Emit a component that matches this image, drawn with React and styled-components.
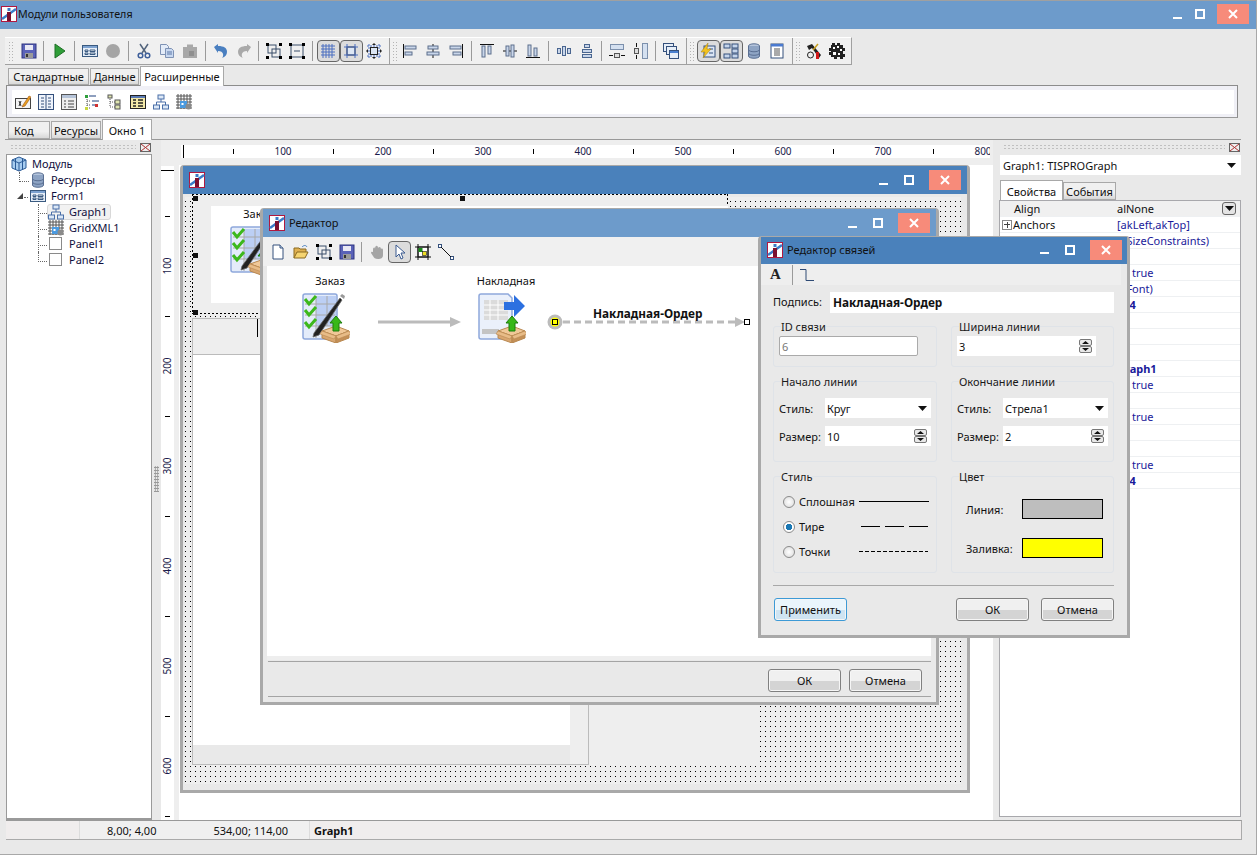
import React from 'react';
import styled, { createGlobalStyle } from 'styled-components';

const GlobalStyle = createGlobalStyle`
  html, body { margin: 0; padding: 0; background: #e9e9e9; }
  * { box-sizing: border-box; }
  body { font-family: "Noto Sans", "Liberation Sans", sans-serif; font-size: 11px; color: #111; }
`;

/* icons */
const Corners = ({ x1 = 1, y1 = 1, x2 = 15, y2 = 15 }) => (
  <g fill="#000">
    <rect x={x1 - 1} y={y1 - 1} width="3" height="3" />
    <rect x={x2 - 2} y={y1 - 1} width="3" height="3" />
    <rect x={x1 - 1} y={y2 - 2} width="3" height="3" />
    <rect x={x2 - 2} y={y2 - 2} width="3" height="3" />
  </g>
);

const ICONS = {
  save: <g><rect x="1" y="1" width="14" height="14" fill="#5a62b8" stroke="#2e3480" /><rect x="4" y="2" width="8" height="5" fill="#e8e8f4" /><rect x="4" y="10" width="8" height="5" fill="#9a9a9a" /><rect x="5" y="11" width="2" height="3" fill="#333" /></g>,
  play: <path d="M4 1 L14 8 L4 15 Z" fill="#2f9e38" stroke="#1f6f26" />,
  form: <g><rect x="0.5" y="2.5" width="15" height="11" fill="#e6eef8" stroke="#3a5a80" /><rect x="1" y="3" width="14" height="2" fill="#7da2d0" /><path d="M3 7h3v1.5H3zM3 10h3v1.5H3z" fill="none" stroke="#3a5a80" /><path d="M8 7h5v1.5H8zM8 10h5v1.5H8z" fill="#fff" stroke="#3a5a80" /></g>,
  stop: <circle cx="8" cy="8" r="7" fill="#a5a5a5" />,
  cut: <g fill="none" stroke="#52647c" strokeWidth="1.5"><path d="M4 1l6 9M12 1L6 10" /><circle cx="4.5" cy="12.5" r="2.3" stroke="#3e5f9a" /><circle cx="11.5" cy="12.5" r="2.3" stroke="#3e5f9a" /></g>,
  copy: <g stroke="#7e92b4"><path d="M1.5 1.5h6l2 2v8h-8z" fill="#e4ecf8" /><path d="M6.5 5.5h6l2 2v7h-8z" fill="#c8d8f0" /><path d="M8 9h5M8 11h5" stroke="#5a76a6" /></g>,
  paste: <g fill="#a8a8a8"><rect x="1" y="4" width="14" height="11" /><rect x="5" y="1.5" width="6" height="4" /><rect x="7" y="8" width="5" height="5" fill="#8f8f8f" /></g>,
  undo: <path d="M1 4l4-3v2c6 0 9 2 9 6 0 3-2 5-5 6 2-2 2-7-4-7v2z" fill="#4a7fc0" />,
  redo: <path d="M15 4l-4-3v2C5 3 2 5 2 9c0 3 2 5 5 6-2-2-2-7 4-7v2z" fill="#a9a9a9" />,
  group: <g><g fill="none" stroke="#3a4f6a"><rect x="2" y="2" width="8" height="8" /><rect x="6" y="6" width="8" height="8" /></g><Corners /></g>,
  ungroup: <g><g fill="none" stroke="#3a4f6a"><rect x="2" y="2" width="12" height="12" /><path d="M5 8h6" /></g><Corners /></g>,
  grid: <path d="M3 1v14M6 1v14M9 1v14M12 1v14M1 3h14M1 6h14M1 9h14M1 12h14" stroke="#4a6fc0" fill="none" />,
  snap: <g><rect x="4" y="4" width="8" height="8" fill="#dce6f4" stroke="#222" /><path d="M1 4h14M1 12h14M4 1v14M12 1v14" stroke="#4a6fc0" /></g>,
  snap2: <g><rect x="4.5" y="4.5" width="7" height="7" fill="#dce6f4" stroke="#222" /><path d="M1 3h14M1 13h14M3 1v14M13 1v14" stroke="#4a6fc0" strokeDasharray="2 1" /><path d="M8 0l-2 2h4zM8 16l-2-2h4zM0 8l2-2v4zM16 8l-2-2v4z" fill="#222" /></g>,
  alignL: <g><path d="M1.5 1v14" stroke="#111" /><rect x="3" y="3" width="11" height="3" fill="#c9d6ea" stroke="#5c6f8c" /><rect x="3" y="9" width="7" height="3" fill="#c9d6ea" stroke="#5c6f8c" /></g>,
  alignC: <g><path d="M8 1v14" stroke="#111" /><rect x="3" y="3" width="10" height="3" fill="#c9d6ea" stroke="#5c6f8c" /><rect x="2" y="9" width="12" height="3" fill="#c9d6ea" stroke="#5c6f8c" /></g>,
  alignR: <g><path d="M14.5 1v14" stroke="#111" /><rect x="2" y="3" width="11" height="3" fill="#c9d6ea" stroke="#5c6f8c" /><rect x="5" y="9" width="8" height="3" fill="#c9d6ea" stroke="#5c6f8c" /></g>,
  alignT: <g><path d="M1 1.5h14" stroke="#111" /><rect x="3" y="3" width="3" height="11" fill="#c9d6ea" stroke="#5c6f8c" /><rect x="9" y="3" width="3" height="8" fill="#c9d6ea" stroke="#5c6f8c" /></g>,
  alignM: <g><path d="M1 8h14" stroke="#111" /><rect x="4" y="3" width="3" height="10" fill="#c9d6ea" stroke="#5c6f8c" /><rect x="9" y="2" width="3" height="12" fill="#c9d6ea" stroke="#5c6f8c" /></g>,
  alignB: <g><path d="M1 14.5h14" stroke="#111" /><rect x="3" y="2" width="3" height="11" fill="#c9d6ea" stroke="#5c6f8c" /><rect x="9" y="5" width="3" height="8" fill="#c9d6ea" stroke="#5c6f8c" /></g>,
  spaceH: <g fill="#c9d6ea" stroke="#4a6690"><rect x="1.5" y="5.5" width="3" height="5" /><rect x="6.5" y="3.5" width="3" height="9" /><rect x="11.5" y="5.5" width="3" height="5" /></g>,
  spaceV: <g fill="#c9d6ea" stroke="#4a6690"><rect x="5.5" y="1.5" width="5" height="3" /><rect x="3.5" y="6.5" width="9" height="3" /><rect x="3.5" y="11.5" width="9" height="3" /></g>,
  sizeW: <g><rect x="1.5" y="1.5" width="13" height="5" fill="#d4e0f0" stroke="#7c90ac" /><rect x="5.5" y="10.5" width="5" height="4" fill="#ddd" stroke="#555" /><path d="M0 12.5h4M12 12.5h4" stroke="#111" /></g>,
  sizeH: <g><rect x="10.5" y="0.5" width="5" height="15" fill="#d4e0f0" stroke="#7c90ac" /><rect x="2.5" y="5.5" width="4" height="5" fill="#ddd" stroke="#555" /><path d="M4.5 0v4M4.5 12v4" stroke="#111" /></g>,
  windows: <g fill="#e6eef8" stroke="#34507c"><rect x="0.5" y="0.5" width="10" height="8" /><rect x="3.5" y="3.5" width="10" height="8" /><rect x="6.5" y="7.5" width="9" height="8" /><path d="M7 9h8" stroke="#4a80d0" strokeWidth="2" /></g>,
  events: <g><rect x="4" y="3" width="11" height="11" fill="#dce6f4" stroke="#34507c" /><path d="M9 6h4M9 10h4" stroke="#34507c" /><path d="M8 0L1 9h4l-2 6 8-9H7z" fill="#f2c21e" stroke="#a07c10" strokeWidth="0.5" /></g>,
  struct: <g fill="#c4d4ea" stroke="#34507c"><rect x="1" y="1" width="6" height="4" /><rect x="1" y="11" width="6" height="4" /><rect x="9" y="1" width="6" height="4" /><rect x="9" y="6" width="6" height="4" /><rect x="9" y="11" width="6" height="4" /></g>,
  db: <g stroke="#5a6f92"><ellipse cx="8" cy="3" rx="5.5" ry="2.2" fill="#b4c4dc" /><path d="M2.5 3v10c0 3 11 3 11 0V3" fill="#8ea4c4" /><path d="M2.5 6.5c0 3 11 3 11 0M2.5 10c0 3 11 3 11 0" fill="none" /></g>,
  page: <g><rect x="2" y="1" width="12" height="14" fill="#fff" stroke="#34507c" /><rect x="2" y="1" width="12" height="2.5" fill="#4a7ad0" /><path d="M5 6h6M5 8h6M5 10h6M5 12h6" stroke="#555" /></g>,
  tools: <g><path d="M1 3l5-2 9 11-2 3L6 5 3 7z" fill="#222" /><path d="M10 9h3v7h-3z" fill="#d01818" /><circle cx="4.5" cy="12" r="3" fill="none" stroke="#222" /><path d="M12 1L7 7" stroke="#c8a020" strokeWidth="1.5" /></g>,
  chip: <g fill="#222"><path d="M3 0h3v2h2V0h3v2h3v3h2v3h-2v3h2v3h-2v2h-3v-2H8v2H5v-2H2v-2H0v-3h2V8H0V5h2V2h1z" /><path d="M4 4h2v2H4zM8 3h2v2H8zM11 6h2v2h-2zM4 9h3v3H4zM9 10h2v2H9z" fill="#fff" /></g>,
  edit: <g><rect x="0.5" y="4.5" width="15" height="10" fill="#f4f4f4" stroke="#444" /><path d="M4 7l2 5M6 7l-2 5" stroke="#333" /><path d="M8 11l6-9 2 1-6 9-3 1z" fill="#e8a020" stroke="#a05010" strokeWidth="0.6" /></g>,
  cols: <g><rect x="0.5" y="0.5" width="15" height="15" fill="#eef3fb" stroke="#34507c" /><path d="M8 1v14" stroke="#34507c" /><path d="M3 4h3M3 7h3M3 10h3M3 13h3M10 4h3M10 7h3M10 10h3M10 13h3" stroke="#34507c" /></g>,
  listbox: <g><rect x="0.5" y="0.5" width="15" height="15" fill="#eee" stroke="#555" /><rect x="1" y="1" width="14" height="3" fill="#b6c4d8" /><path d="M3 7h2M7 7h6M3 10h2M7 10h6M3 13h2M7 13h6" stroke="#444" /></g>,
  treeA: <g><path d="M3 3v11M3 7h4M3 11h4M3 14h4" stroke="#555" strokeDasharray="1 1" fill="none" /><path d="M5 2h7M8 7h7M8 11h3" stroke="#1c3e7c" /><rect x="1" y="1" width="3" height="3" fill="#2e9e3a" /><rect x="11" y="10" width="3" height="3" fill="#d03030" /><rect x="1" y="13" width="3" height="3" fill="#c8d840" /></g>,
  treeB: <g><path d="M3 3v10M3 8h5M3 13h5" stroke="#555" strokeDasharray="1 1" fill="none" /><rect x="1" y="1" width="4" height="3" fill="#e0e6b0" stroke="#555" /><rect x="8" y="6" width="5" height="4" fill="#e0e6b0" stroke="#555" /><rect x="8" y="11" width="5" height="4" fill="#e0e6b0" stroke="#555" /></g>,
  table: <g><rect x="0.5" y="1.5" width="15" height="13" fill="#f2e8a8" stroke="#222" /><rect x="1" y="2" width="14" height="2" fill="#5a7ab4" /><path d="M3 6h3M3 9h3M3 12h3M8 6h5M8 9h5M8 12h5" stroke="#222" strokeWidth="1.4" /></g>,
  org: <g fill="#dce8f6" stroke="#4a6fa8"><rect x="5" y="1" width="6" height="4" /><rect x="0.5" y="11" width="6" height="4" /><rect x="9.5" y="11" width="6" height="4" /><path d="M8 5v3M3.5 11V8h9v3" fill="none" /></g>,
  gridxml: <g><path d="M2 0v15M5 0v15M8 0v15M11 0v15M14 0v15M0 2h16M0 5h16M0 8h16M0 11h16M0 14h16" stroke="#555" /><rect x="4" y="7" width="7" height="7" fill="#4a9ae0" /><rect x="5.5" y="9" width="2" height="2" fill="#fff" /><circle cx="12.5" cy="12.5" r="3" fill="#8a8a8a" /></g>,
  module: <g stroke="#2a5a96" fill="#a8cdf0"><path d="M8 1l7 3v8l-7 3-7-3V4z" /><path d="M1 4l7 3 7-3M8 7v8M4.5 2.5v11M11.5 2.5v11" fill="none" /></g>,
  checkbox: <rect x="1.5" y="1.5" width="12" height="12" fill="#fff" stroke="#8a8a8a" />,
  newDoc: <g><path d="M3 1h7l3 3v11H3z" fill="#fff" stroke="#34507c" /><path d="M10 1v3h3" fill="#c8d8ec" stroke="#34507c" /></g>,
  open: <g><path d="M1 14V4h5l1 1h6v3" fill="#e0b050" stroke="#8a6a20" /><path d="M1 14l3-6h11l-3 6z" fill="#f6d470" stroke="#8a6a20" /><path d="M9 3c2-2 4-2 5 0" fill="none" stroke="#4a80c0" /></g>,
  hand: <path d="M4 6c0-3 2-3 2-1 0-4 3-4 3-1 1-2 3-1 3 1 1-1 2 0 2 1v5c0 3-2 4-5 4s-4-1-5-3L2 9c0-2 2-1 2-1z" fill="#a5a5a5" />,
  pointer: <path d="M4 1v12l3-3 2 5 2-1-2-5h4z" fill="#fff" stroke="#3a5a90" />,
  nodeTool: <g><rect x="3" y="3" width="10" height="10" fill="#fff" stroke="#111" /><path d="M0 3h16M0 13h16M3 0v16M13 0v16" stroke="#111" /><rect x="3.5" y="4" width="4" height="4" fill="#1a8a1a" /><rect x="7.5" y="7.5" width="4" height="4" fill="#f0e020" stroke="#111" strokeWidth="0.6" /></g>,
  linkTool: <g><rect x="0.5" y="0.5" width="3" height="3" fill="#fff" stroke="#34507c" /><rect x="12.5" y="12.5" width="3" height="3" fill="#fff" stroke="#34507c" /><path d="M3 3l10 10" stroke="#111" /></g>,
  elbow: <path d="M2 2.5h6v11h8" fill="none" stroke="#2e4a74" />,
};

const Glyph = styled.svg`
  display: block;
  flex: none;
`;

const Ico = ({ name, size = 16 }) => (
  <Glyph width={size} height={size} viewBox="0 0 16 16">{ICONS[name]}</Glyph>
);

const AppLogo = () => (
  <Glyph width="16" height="16" viewBox="0 0 16 16">
    <rect x="0.5" y="0.5" width="15" height="15" fill="#fff" stroke="#b01840" />
    <path d="M1 13L15 3" stroke="#3a7cc8" strokeWidth="2.5" />
    <rect x="6" y="6" width="4" height="9" fill="#7a1030" />
    <rect x="6.5" y="2" width="3" height="3" fill="#3a7cc8" />
  </Glyph>
);

const Carton = () => (
  <g>
    <path d="M20 38l14-5 13 5-13 5z" fill="#f0c898" stroke="#b88850" />
    <path d="M20 38v7l14 5V43z" fill="#d8a670" stroke="#b88850" />
    <path d="M47 38v7l-13 5V43z" fill="#c49058" stroke="#b88850" />
    <path d="M20 38l-2 3 14 5 2-3zM47 38l2 3-13 5-2-3z" fill="#e8bc88" stroke="#b88850" strokeWidth="0.6" />
    <path d="M34 23l6 7h-3v8h-6v-8h-3z" fill="#38b818" stroke="#1c7c0c" />
  </g>
);

const OrderIcon = () => (
  <Glyph width="48" height="50" viewBox="0 0 48 50">
    <rect x="1" y="1" width="34" height="45" rx="2" fill="#e4ecfa" stroke="#8ea8dc" strokeWidth="1.5" />
    <rect x="14" y="3" width="20" height="30" fill="#bccff4" />
    <path d="M3 11h30M3 22h30M3 33h30M14 3v42M25 3v30" stroke="#a8a8a8" fill="none" />
    <path d="M3 6l4 5 7-8M3 17l4 5 7-8M3 29l4 5 7-8" fill="none" stroke="#3cb81c" strokeWidth="3" />
    <path d="M12 40L38 5l2 2-23 35-6 2z" fill="#222" stroke="#666" strokeWidth="0.8" />
    <path d="M38 3l2-2 3 2-1 3z" fill="#999" />
    <Carton />
  </Glyph>
);

const InvoiceIcon = () => (
  <Glyph width="48" height="50" viewBox="0 0 48 50">
    <path d="M1 3a2 2 0 0 1 2-2h27l4 4v41H3a2 2 0 0 1-2-2z" fill="#eaf0fb" stroke="#8ea8dc" strokeWidth="1.5" />
    <path d="M6 7h24v20H6z" fill="#dbdbdb" />
    <path d="M6 12h24M6 17h24M6 22h24M12 7v20M20 7v20" stroke="#fff" />
    <rect x="4" y="36" width="17" height="5" fill="#c4c4c4" />
    <path d="M26 9h10V2l11 11-11 11v-7H26z" fill="#2c70e0" />
    <Carton />
  </Glyph>
);

const SpinGlyph = () => (
  <Glyph width="13" height="14" viewBox="0 0 13 14">
    <rect x="0.5" y="0.5" width="12" height="6" rx="1.5" fill="#e8e8e8" stroke="#777" />
    <rect x="0.5" y="7.5" width="12" height="6" rx="1.5" fill="#e8e8e8" stroke="#777" />
    <path d="M3 5l3.5-3L10 5zM3 9l3.5 3L10 9z" fill="#111" />
  </Glyph>
);

const ArrowGlyph = () => (
  <Glyph width="9" height="5" viewBox="0 0 9 5"><path d="M0 0h9L4.5 5z" fill="#111" /></Glyph>
);

const PanelClose = () => (
  <Glyph width="11" height="9" viewBox="0 0 11 9">
    <rect x="0.5" y="0.5" width="10" height="8" fill="#eee" stroke="#666" />
    <path d="M1 1l9 7M10 1L1 8" stroke="#b03030" />
  </Glyph>
);

/* page frame */
const Page = styled.div`
  position: relative;
  width: 1257px;
  height: 855px;
  background: #e9e9e9;
  border-top: 1px solid #a0a0a0;
  border-right: 1px solid #a8a8a8;
  border-bottom: 1px solid #a8a8a8;
  overflow: hidden;
  display: flex;
  flex-direction: column;
`;

const TitleBar = styled.div`
  display: flex;
  align-items: center;
  gap: ${(p) => p.$gap || 1}px;
  height: ${(p) => p.$height || 28}px;
  flex: none;
  padding: 0 ${(p) => p.$right || 7}px ${(p) => p.$under ?? 2}px ${(p) => p.$pad || 1}px;
  background: ${(p) => (p.$strong ? '#4a81bb' : '#6d9bcb')};
  color: #111;
  font-size: ${(p) => p.$size || 11}px;
`;

const TitleText = styled.span`
  flex: 1;
  margin-top: -1px;
`;

const WinMin = styled.span`
  width: 9px;
  height: 2px;
  margin-top: 7px;
  background: #fff;
`;

const WinMax = styled.span`
  width: 10px;
  height: 10px;
  margin-left: 12px;
  border: 2px solid #fff;
`;

const WinClose = styled.span`
  width: 32px;
  height: 20px;
  margin-left: 11px;
  background: #f78b7a;
  display: flex;
  align-items: center;
  justify-content: center;
`;

const Controls = () => (
  <>
    <WinMin />
    <WinMax />
    <WinClose>
      <Glyph width="10" height="10" viewBox="0 0 10 10"><path d="M1 1l8 8M9 1l-8 8" stroke="#fff" strokeWidth="2" /></Glyph>
    </WinClose>
  </>
);

const Body = styled.div`
  flex: 1;
  display: flex;
  flex-direction: column;
  padding: 8px 15px 0 5px;
`;

/* main toolbar */
const Toolbar = styled.div`
  display: flex;
  align-items: center;
  width: 847px;
  height: 28px;
  flex: none;
  padding-left: 3px;
  background: #f0f0f0;
  border-top: 1px solid #fff;
  border-bottom: 1px solid #a0a0a0;
  border-right: 1px solid #a0a0a0;
`;

const Grip = styled.span`
  width: 6px;
  height: 20px;
  margin-right: ${(p) => p.$after ?? 3}px;
  flex: none;
  background-image: radial-gradient(#b4b4b4 1px, transparent 1px);
  background-size: 3px 3px;
`;

const ToolBtn = styled.span`
  width: ${(p) => p.$w || 23}px;
  height: 22px;
  flex: none;
  display: flex;
  align-items: center;
  justify-content: center;
  border-radius: 4px;
  border: ${(p) => (p.$pressed ? '1px solid #666' : '1px solid transparent')};
  background: ${(p) => (p.$pressed ? '#dcdcdc' : 'transparent')};
`;

const Sep = styled.span`
  width: ${(p) => p.$w || 7.75}px;
  height: 20px;
  flex: none;
  display: flex;
  justify-content: center;
  &::before {
    content: '';
    width: 1px;
    background: #9a9a9a;
  }
`;

const BandBreak = styled.span`
  width: 3px;
  height: 27px;
  margin: 0 2px 0 1px;
  flex: none;
  border-right: 1px solid #a0a0a0;
`;

const TOOLBAR = [
  ['save'], ['play'], ['form', 'stop'], ['cut', 'copy', 'paste'], ['undo', 'redo'], ['group', 'ungroup'],
  ['*grid', '*snap', 'snap2'],
];
const TOOLBAR2 = [['alignL', 'alignC', 'alignR'], ['alignT', 'alignM', 'alignB'], ['spaceH', 'spaceV'], ['sizeW', 'sizeH'], ['windows']];

const ToolGroups = ({ groups }) =>
  groups.map((group, i) => (
    <React.Fragment key={i}>
      {i > 0 && <Sep />}
      {group.map((n) => (
        <ToolBtn key={n} $pressed={n[0] === '*'}>
          <Ico name={n.replace('*', '')} />
        </ToolBtn>
      ))}
    </React.Fragment>
  ));

/* tabs */
const TabRow = styled.div`
  display: flex;
  align-items: flex-end;
  height: ${(p) => p.$height}px;
  flex: none;
  padding-left: 3px;
  gap: 1px;
  border-bottom: ${(p) => (p.$line ? '1px solid #999' : 'none')};
`;

const Tab = styled.span`
  width: ${(p) => p.$w}px;
  height: ${(p) => (p.$active ? p.$h + 3 : p.$h)}px;
  flex: none;
  display: flex;
  align-items: center;
  justify-content: ${(p) => (p.$left ? 'flex-start' : 'center')};
  padding-left: ${(p) => (p.$left ? 5 : 0)}px;
  margin-bottom: ${(p) => (p.$active ? -1 : 0)}px;
  position: relative;
  background: ${(p) => (p.$active ? '#fff' : 'linear-gradient(#f0f0f0 60%, #d8d8d8)')};
  border: 1px solid #a8a8a8;
  border-bottom: ${(p) => (p.$active ? 'none' : '1px solid #a8a8a8')};
  font-size: 11px;
`;

const PaletteBox = styled.div`
  width: 1232px;
  height: 33px;
  flex: none;
  margin-left: 1px;
  padding: 4px 3px 3px 5px;
  border: 1px solid #8c8c8c;
  border-bottom-color: #999;
  background: #f0f0f6;
`;

const PaletteInner = styled.div`
  display: flex;
  align-items: center;
  height: 100%;
  gap: 7px;
  padding-left: 3px;
  background: #fff;
`;

/* work area */
const Work = styled.div`
  display: flex;
  height: 680px;
  flex: none;
  margin-left: 1px;
`;

const SidePanel = styled.div`
  width: ${(p) => p.$w}px;
  flex: none;
  display: flex;
  flex-direction: column;
`;

const PanelHead = styled.div`
  display: flex;
  align-items: center;
  justify-content: space-between;
  height: 14px;
  flex: none;
  padding: 0 1px 0 4px;
`;

const HeadGrip = styled.span`
  flex: 1;
  height: 7px;
  margin-right: 4px;
  background-image: radial-gradient(#c0c0c0 1px, transparent 1px);
  background-size: 4px 3px;
`;

const TreeBox = styled.div`
  flex: 1;
  background: #fff;
  border: 1px solid #9a9a9a;
  border-bottom-width: 2px;
  padding-top: 1px;
`;

const TreeRow = styled.div`
  display: flex;
  align-items: center;
  height: 16px;
  padding-left: ${(p) => p.$indent}px;
`;

const Branch = styled.span`
  width: ${(p) => p.$w}px;
  height: 16px;
  flex: none;
  margin-right: 1px;
  position: relative;
  &::before {
    content: '';
    position: absolute;
    left: 0;
    top: 0;
    width: 100%;
    height: 9px;
    border-left: ${(p) => (p.$flat ? 'none' : '1px dotted #666')};
    border-bottom: 1px dotted #666;
  }
  &::after {
    content: '';
    display: ${(p) => (p.$through ? 'block' : 'none')};
    position: absolute;
    left: 0;
    top: 9px;
    height: 7px;
    border-left: 1px dotted #666;
  }
`;

const Expander = styled.span`
  width: 0;
  height: 0;
  flex: none;
  margin-right: 1px;
  border-left: 6px solid transparent;
  border-bottom: 6px solid #444;
`;

const TreeItem = styled.span`
  display: flex;
  align-items: center;
  gap: 5px;
  height: 16px;
  padding-right: 3px;
  flex: none;
  border-radius: 3px;
  border: ${(p) => (p.$selected ? '1px solid #d8d8d8' : '1px solid transparent')};
  background: ${(p) => (p.$selected ? '#f2f2f2' : 'transparent')};
  font-size: 11px;
  color: #101040;
`;

const TreeLabel = styled.span`
  margin-top: -2px;
`;

const Splitter = styled.div`
  width: ${(p) => p.$w}px;
  flex: none;
  display: flex;
  align-items: center;
  justify-content: center;
`;

const SplitterGrip = styled.span`
  width: 5px;
  height: 26px;
  margin-bottom: 2px;
  background-image: radial-gradient(#999 1px, transparent 1px);
  background-size: 2.5px 3px;
`;

const Center = styled.div`
  flex: 1;
  display: flex;
  flex-direction: column;
  background: #eeeeee;
`;

const HRuler = styled.div`
  display: flex;
  width: 809px;
  height: 13px;
  margin: 5px 0 7px 20px;
  padding-left: 2px;
  flex: none;
  background: #fff;
  overflow: hidden;
`;

const HMark = styled.span`
  width: 50px;
  flex: none;
  position: relative;
  &::before {
    content: '${(p) => p.$label || ''}';
    position: absolute;
    left: 0;
    top: ${(p) => (p.$label ? -1 : 4)}px;
    width: ${(p) => (p.$label ? 'auto' : '1px')};
    height: ${(p) => (p.$label ? 'auto' : '5px')};
    transform: ${(p) => (p.$label ? 'translateX(-50%)' : 'none')};
    background: ${(p) => (p.$label ? 'transparent' : '#000')};
    font-size: 10px;
    color: #1a1a4a;
  }
`;

const HZero = styled(HMark)`
  &::before {
    top: 0;
    height: 13px;
  }
`;

const StageRow = styled.div`
  flex: 1;
  display: flex;
  min-height: 0;
`;

const VRuler = styled.div`
  width: 13px;
  flex: none;
  margin-top: 1px;
  background: #fff;
  display: flex;
  flex-direction: column;
  padding-top: 4px;
  overflow: hidden;
`;

const VMark = styled.span`
  height: 50px;
  flex: none;
  position: relative;
  &::before {
    content: '${(p) => p.$label || ''}';
    position: absolute;
    top: 0;
    left: ${(p) => (p.$label ? '0' : '4px')};
    width: ${(p) => (p.$label ? 'auto' : '5px')};
    height: ${(p) => (p.$label ? 'auto' : '1px')};
    background: ${(p) => (p.$label ? 'transparent' : '#000')};
    writing-mode: vertical-rl;
    transform: ${(p) => (p.$label ? 'translateY(-50%) rotate(180deg)' : 'none')};
    font-size: 10px;
    line-height: 13px;
    color: #1a1a4a;
  }
`;

const VZero = styled(VMark)`
  height: 46px;
  &::before {
    left: 0;
    width: 13px;
  }
`;

const Desktop = styled.div`
  flex: 1;
  margin-left: 5px;
  background: #fff;
`;

/* right panel */
const ComboBar = styled.div`
  display: flex;
  align-items: center;
  justify-content: space-between;
  height: 20px;
  margin: 1px 0 3px 1px;
  padding: 0 5px 0 3px;
  flex: none;
  background: #fff;
  font-size: 11px;
`;

const PropTabs = styled.div`
  display: flex;
  align-items: flex-end;
  height: 22px;
  flex: none;
  padding-left: 1px;
`;

const PropBox = styled.div`
  flex: 1;
  margin-bottom: 3px;
  background: #fff;
  border: 1px solid #a8a8ac;
  position: relative;
`;

const PropRow = styled.div`
  display: grid;
  grid-template-columns: 117px 1fr;
  height: 16px;
  align-items: center;
  border-bottom: 1px solid #eef0f2;
  background: ${(p) => (p.$current ? '#f0f0f0' : 'transparent')};
  font-size: 11px;
`;

const PropName = styled.span`
  display: flex;
  align-items: center;
  gap: 1px;
  padding-left: ${(p) => (p.$plus ? 2 : 14)}px;
`;

const PlusBox = styled.span`
  width: 10px;
  height: 10px;
  flex: none;
  border: 1px solid #888;
  background: linear-gradient(#444, #444) center / 6px 1px no-repeat, linear-gradient(#444, #444) center / 1px 6px no-repeat;
`;

const PropValue = styled.span`
  display: flex;
  align-items: center;
  justify-content: space-between;
  padding-left: ${(p) => p.$indent || 0}px;
  padding-right: 4px;
  color: ${(p) => (p.$plain ? '#111' : '#1a1a9a')};
  font-weight: ${(p) => (p.$bold ? 700 : 400)};
  white-space: nowrap;
`;

const DropBtn = styled.span`
  width: 14px;
  height: 13px;
  flex: none;
  display: flex;
  align-items: center;
  justify-content: center;
  border: 1px solid #666;
  border-radius: 3px;
  background: #e4e4e4;
`;

/* status bar */
const Status = styled.div`
  display: flex;
  align-items: center;
  width: 1236px;
  height: 20px;
  flex: none;
  margin-left: 1px;
  background: #f0eded;
  border-top: 1px solid #999;
  border-bottom: 1px solid #aaa;
  border-right: 1px solid #aaa;
  font-size: 11px;
`;

const StatusCell = styled.span`
  width: ${(p) => p.$w}px;
  height: 100%;
  flex: none;
  display: flex;
  align-items: center;
  padding-left: ${(p) => p.$pad}px;
  border-right: ${(p) => (p.$line ? '1px solid #dcdcdc' : 'none')};
  background: ${(p) => p.$bg || 'transparent'};
  font-weight: ${(p) => (p.$bold ? 700 : 400)};
`;

const StatusSize = styled.span`
  margin-left: 57px;
`;

/* floating windows */
const Win = styled.div`
  position: absolute;
  left: ${(p) => p.$x}px;
  top: ${(p) => p.$y}px;
  width: ${(p) => p.$w}px;
  height: ${(p) => p.$h}px;
  display: flex;
  flex-direction: column;
  background: #e9e9e9;
  border: 3px solid #a9a9a9;
  border-top-width: 1px;
  border-radius: 4px 4px 0 0;
`;

const Client = styled.div`
  flex: 1;
  padding: 3px 6px 6px 2px;
  display: flex;
`;

const Dots = styled.div`
  position: relative;
  flex: 1;
  background-color: #eee;
  background-image: linear-gradient(#eeeeee 4px, transparent 4px), linear-gradient(90deg, #000 1px, #eeeeee 1px);
  background-size: 5px 5px, 5px 5px;
`;

const Selection = styled.div`
  position: absolute;
  left: 7px;
  top: -3px;
  width: 536px;
  height: 120px;
  padding: 12px 0 11px 19px;
  display: flex;
  background:
    linear-gradient(90deg, #000 2px, transparent 2px) top left / 4px 1px repeat-x,
    linear-gradient(90deg, #000 2px, transparent 2px) bottom left / 4px 1px repeat-x,
    linear-gradient(#000 2px, transparent 2px) top left / 1px 4px repeat-y,
    linear-gradient(#000 2px, transparent 2px) top right / 1px 4px repeat-y,
    #eee;
`;

const Handle = styled.span`
  position: absolute;
  left: ${(p) => p.$x}px;
  top: ${(p) => p.$y}px;
  width: 5px;
  height: 5px;
  background: #111;
`;

const GraphCanvas = styled.div`
  flex: 1;
  background: #fff;
  display: flex;
  flex-direction: column;
  align-items: flex-start;
  padding: 0 0 0 19px;
`;

const NodeCaption = styled.div`
  width: 56px;
  text-align: center;
  white-space: nowrap;
  display: flex;
  justify-content: center;
  align-self: flex-start;
  font-size: 11px;
  color: #111;
  line-height: 12px;
  margin-bottom: ${(p) => p.$gap || 5}px;
  margin-top: ${(p) => p.$top || 0}px;
`;

const GridPanel = styled.div`
  position: absolute;
  left: 7px;
  top: 121px;
  width: 397px;
  height: 447px;
  display: flex;
  flex-direction: column;
  border: 1px solid #bbb;
  background: #eee;
`;

const GridHead = styled.div`
  height: 36px;
  flex: none;
  border-bottom: 1px solid #bbb;
  padding-left: 64px;
`;

const HeadTick = styled.span`
  display: block;
  width: 1px;
  height: 18px;
  background: #000;
`;

const GridWhite = styled.div`
  flex: 1;
  background: #fff;
  margin-right: 18px;
`;

const GridFoot = styled.div`
  height: 19px;
  flex: none;
  margin-right: 18px;
  background: #e9e9e9;
`;

const SidePane = styled.div`
  position: absolute;
  left: 405px;
  top: 121px;
  width: 168px;
  height: 447px;
  background: #eee;
`;

/* editor */
const EditorTools = styled.div`
  display: flex;
  align-items: center;
  height: 29px;
  flex: none;
  padding-left: 3px;
  background: #f0f0f0;
`;

const EditorBody = styled.div`
  flex: 1;
  margin: 0 5px 0 4px;
  background: #fff;
  position: relative;
`;

const Node = styled.div`
  position: absolute;
  left: ${(p) => p.$x}px;
  top: ${(p) => p.$y}px;
  display: flex;
  flex-direction: column;
  align-items: flex-start;
  width: 48px;
`;

const Wire = styled.svg`
  position: absolute;
  left: ${(p) => p.$x}px;
  top: ${(p) => p.$y}px;
`;

const WireLabel = styled.div`
  position: absolute;
  left: 326px;
  top: 39px;
  font-weight: 700;
  font-size: 11.8px;
  color: #111;
`;

const EditorStrip = styled.div`
  height: 4px;
  flex: none;
  margin: 0 5px 0 4px;
  background: #eee;
`;

const EditorFoot = styled.div`
  height: 36px;
  flex: none;
  margin: 1px 5px 5px 5px;
  padding: 7px 9px 0 0;
  display: flex;
  justify-content: flex-end;
  gap: 8px;
  border-top: 1px solid #a4a4a4;
  border-bottom: 1px solid #a4a4a4;
`;

const Btn = styled.span`
  width: 73px;
  height: 23px;
  flex: none;
  display: flex;
  align-items: center;
  justify-content: center;
  border: 1px solid ${(p) => (p.$default ? '#3d9ad6' : '#808080')};
  border-radius: 3px;
  background: ${(p) =>
    p.$default ? 'linear-gradient(#eaf5fc 50%, #cfe4f2 52%)' : 'linear-gradient(#f0f0f0 50%, #d4d4d4 52%)'};
  box-shadow: inset 0 0 0 1px #f6f6f6;
  font-size: 11px;
`;

/* link dialog */
const DialogStrip = styled.div`
  display: flex;
  align-items: center;
  height: 21px;
  flex: none;
  margin-right: 6px;
  padding-left: 9px;
  background: #eeeeee;
`;

const SerifA = styled.span`
  font-family: "Liberation Serif", serif;
  font-weight: 700;
  font-size: 15px;
  width: 16px;
  color: #222;
`;

const DialogBody = styled.div`
  flex: 1;
  display: flex;
  flex-direction: column;
  padding: 7px 13px 0 12px;
`;

const CaptionRow = styled.div`
  display: flex;
  align-items: center;
  height: 21px;
  flex: none;
  gap: 8px;
  margin-bottom: 9px;
  font-size: 11px;
`;

const CaptionLabel = styled.span`
  margin-top: -3px;
`;

const CaptionInput = styled.span`
  flex: 1;
  height: 21px;
  display: flex;
  align-items: center;
  padding: 0 0 2px 3px;
  background: #fff;
  font-weight: 700;
  font-size: 11.8px;
  color: #111;
`;

const GroupGrid = styled.div`
  display: grid;
  grid-template-columns: 164px 163px;
  grid-template-rows: 45px 85px 101px;
  column-gap: 14px;
  row-gap: 10px;
`;

const Group = styled.fieldset`
  margin: 0;
  padding: 0 5px;
  min-width: 0;
  border: 1px solid #dfe3e8;
  border-radius: 3px;
  position: relative;
  font-size: 11px;
`;

const Legend = styled.legend`
  margin-left: 2px;
  padding: 0;
  margin-top: -1px;
  font-size: 11px;
  line-height: 9px;
  color: #1a1a1a;
`;

const FieldBox = styled.span`
  height: 20px;
  width: ${(p) => p.$w || '100%'};
  flex: ${(p) => (p.$grow ? 1 : 'none')};
  display: flex;
  align-items: center;
  justify-content: space-between;
  padding: 0 4px 0 2px;
  background: #fff;
  border: ${(p) => (p.$outline ? '1px solid #aaa' : 'none')};
  border-radius: ${(p) => (p.$outline ? 2 : 0)}px;
  color: ${(p) => (p.$muted ? '#777' : '#111')};
`;

const FieldLine = styled.div`
  display: flex;
  align-items: center;
  gap: 5px;
  margin-top: ${(p) => p.$top || 0}px;
`;

const FieldLabel = styled.span`
  width: 41px;
  flex: none;
  white-space: nowrap;
`;

const RadioRow = styled.div`
  display: flex;
  align-items: center;
  height: 25px;
  margin-top: ${(p) => p.$top || 0}px;
  padding: 0 3px 0 4px;
  gap: 4px;
`;

const Radio = styled.span`
  width: 12px;
  height: 12px;
  flex: none;
  border-radius: 50%;
  border: 1px solid #8a8a8a;
  background: ${(p) =>
    p.$on ? 'radial-gradient(circle, #1a78b4 0 3px, #fff 3.5px)' : 'radial-gradient(circle, #fff, #d8d8d8)'};
`;

const RadioLabel = styled.span`
  flex: 1;
`;

const Sample = styled.span`
  width: ${(p) => p.$w}px;
  height: 1px;
  flex: none;
  background: ${(p) =>
    p.$dash
      ? `repeating-linear-gradient(90deg, #000 0 ${p.$dash}px, transparent ${p.$dash}px ${p.$dash + p.$space}px)`
      : '#000'};
`;

const SwatchRow = styled.div`
  display: flex;
  align-items: center;
  justify-content: space-between;
  padding: 0 5px 0 9px;
  height: 20px;
  margin-top: ${(p) => p.$top}px;
`;

const Swatch = styled.span`
  width: 81px;
  height: 20px;
  background: ${(p) => p.$color};
  border: 1px solid #000;
`;

const Rule = styled.div`
  height: 1px;
  flex: none;
  margin-top: 12px;
  background: #a8a8a8;
`;

const DialogFoot = styled.div`
  display: flex;
  align-items: center;
  gap: 12px;
  margin-top: 12px;
  padding-left: 1px;
`;

const Grow = styled.span`
  flex: 1;
`;

const PROP_ROWS = [
  { name: 'Anchors', plus: true, value: '[akLeft,akTop]' },
  { value: '(TSizeConstraints)' },
  {},
  { value: 'true', indent: 15 },
  { value: '(TFont)' },
  { value: '114', bold: true },
  {},
  {},
  {},
  { value: 'Graph1', bold: true },
  { value: 'true', indent: 15 },
  {},
  { value: 'true', indent: 15 },
  {},
  {},
  { value: 'true', indent: 15 },
  { value: '534', bold: true },
];

const hMarks = Array.from({ length: 16 }, (_, i) => i + 1);
const vMarks = Array.from({ length: 13 }, (_, i) => i + 1);

const WindowTitle = ({ strong, text, height = 28, under = 0, pad = 7, right = 6 }) => (
  <TitleBar $strong={strong} $height={height} $under={under} $pad={pad} $right={right} $gap={4}>
    <AppLogo />
    <TitleText>{text}</TitleText>
    <Controls />
  </TitleBar>
);

const Spin = ({ value, label }) => (
  <FieldLine $top={8}>
    <FieldLabel>{label}</FieldLabel>
    <FieldBox $grow>
      {value}
      <SpinGlyph />
    </FieldBox>
  </FieldLine>
);

const Choice = ({ value }) => (
  <FieldLine $top={12}>
    <FieldLabel>Стиль:</FieldLabel>
    <FieldBox $grow>
      {value}
      <ArrowGlyph />
    </FieldBox>
  </FieldLine>
);

export default function App() {
  return (
    <Page>
      <GlobalStyle />
      <TitleBar $size={10.7}>
        <AppLogo />
        <TitleText>Модули пользователя</TitleText>
        <Controls />
      </TitleBar>

      <Body>
        <Toolbar>
          <Grip />
          <ToolGroups groups={TOOLBAR} />
          <BandBreak />
          <Grip $after={1} />
          <ToolGroups groups={TOOLBAR2} />
          <BandBreak />
          <Grip $after={2} />
          <ToolBtn $pressed><Ico name="events" /></ToolBtn>
          <ToolBtn $pressed><Ico name="struct" /></ToolBtn>
          <ToolBtn><Ico name="db" /></ToolBtn>
          <ToolBtn><Ico name="page" /></ToolBtn>
          <BandBreak />
          <Grip $after={2} />
          <ToolBtn><Ico name="tools" /></ToolBtn>
          <ToolBtn><Ico name="chip" /></ToolBtn>
        </Toolbar>

        <TabRow $height={20}>
          <Tab $w={81} $h={17}>Стандартные</Tab>
          <Tab $w={49} $h={17}>Данные</Tab>
          <Tab $w={84} $h={17} $active>Расширенные</Tab>
        </TabRow>
        <PaletteBox>
          <PaletteInner>
            {['edit', 'cols', 'listbox', 'treeA', 'treeB', 'table', 'org', 'gridxml'].map((n) => (
              <Ico key={n} name={n} />
            ))}
          </PaletteInner>
        </PaletteBox>
        <TabRow $height={22} $line>
          <Tab $w={42} $h={18} $left>Код</Tab>
          <Tab $w={50} $h={18}>Ресурсы</Tab>
          <Tab $w={50} $h={18} $active>Окно 1</Tab>
        </TabRow>

        <Work>
          <SidePanel $w={146}>
            <PanelHead><HeadGrip /><PanelClose /></PanelHead>
            <TreeBox>
              <TreeRow $indent={3}><TreeItem><Ico name="module" /><TreeLabel>Модуль</TreeLabel></TreeItem></TreeRow>
              <TreeRow $indent={12}><Branch $w={9} /><TreeItem><Ico name="db" /><TreeLabel>Ресурсы</TreeLabel></TreeItem></TreeRow>
              <TreeRow $indent={10}><Expander /><Branch $w={4} $flat /><TreeItem><Ico name="form" /><TreeLabel>Form1</TreeLabel></TreeItem></TreeRow>
              <TreeRow $indent={31}><Branch $w={8} $through /><TreeItem $selected><Ico name="org" /><TreeLabel>Graph1</TreeLabel></TreeItem></TreeRow>
              <TreeRow $indent={31}><Branch $w={8} $through /><TreeItem><Ico name="gridxml" /><TreeLabel>GridXML1</TreeLabel></TreeItem></TreeRow>
              <TreeRow $indent={31}><Branch $w={8} $through /><TreeItem><Ico name="checkbox" /><TreeLabel>Panel1</TreeLabel></TreeItem></TreeRow>
              <TreeRow $indent={31}><Branch $w={8} /><TreeItem><Ico name="checkbox" /><TreeLabel>Panel2</TreeLabel></TreeItem></TreeRow>
            </TreeBox>
          </SidePanel>

          <Splitter $w={9}><SplitterGrip /></Splitter>

          <Center>
            <HRuler>
              <HZero />
              {hMarks.map((i) => (
                <HMark key={i} $label={i % 2 === 0 ? i * 50 : ''} />
              ))}
            </HRuler>
            <StageRow>
              <VRuler>
                <VZero />
                {vMarks.map((i) => (
                  <VMark key={i} $label={i % 2 === 0 ? i * 50 : ''} />
                ))}
              </VRuler>
              <Desktop />
            </StageRow>
          </Center>

          <Splitter $w={6} />

          <SidePanel $w={242}>
            <PanelHead><HeadGrip /><PanelClose /></PanelHead>
            <ComboBar>Graph1: TISPROGraph<ArrowGlyph /></ComboBar>
            <PropTabs>
              <Tab $w={63} $h={18} $active>Свойства</Tab>
              <Tab $w={53} $h={18}>События</Tab>
            </PropTabs>
            <PropBox>
              <PropRow $current>
                <PropName>Align</PropName>
                <PropValue $plain>alNone<DropBtn><ArrowGlyph /></DropBtn></PropValue>
              </PropRow>
              {PROP_ROWS.map((r, i) => (
                <PropRow key={i}>
                  <PropName $plus={r.plus}>{r.plus && <PlusBox />}{r.name}</PropName>
                  <PropValue $bold={r.bold} $indent={r.indent}>{r.value}</PropValue>
                </PropRow>
              ))}
            </PropBox>
          </SidePanel>
        </Work>

        <Status>
          <StatusCell $w={74} $line />
          <StatusCell $w={230} $pad={27} $line $bg="#f0f0f0">
            8,00; 4,00
            <StatusSize>534,00; 114,00</StatusSize>
          </StatusCell>
          <StatusCell $w={100} $pad={4} $bold>Graph1</StatusCell>
        </Status>
      </Body>

      {/* форма в дизайнере */}
      <Win $x={180} $y={164} $w={790} $h={628}>
        <WindowTitle strong text="" pad={6} />
        <Client>
          <Dots>
            <Selection>
              <GraphCanvas>
                <NodeCaption $top={2} $gap={6}>Заказ</NodeCaption>
                <OrderIcon />
              </GraphCanvas>
            </Selection>
            <Handle $x={8} $y={-1} />
            <Handle $x={8} $y={56} />
            <Handle $x={8} $y={113} />
            <Handle $x={275} $y={-1} />
            <GridPanel>
              <GridHead><HeadTick /></GridHead>
              <GridWhite />
              <GridFoot />
            </GridPanel>
            <SidePane />
          </Dots>
        </Client>
      </Win>

      {/* редактор графа */}
      <Win $x={260} $y={207} $w={679} $h={497}>
        <WindowTitle text="Редактор" pad={6} right={6} />
        <EditorTools>
          <ToolBtn><Ico name="newDoc" /></ToolBtn>
          <ToolBtn><Ico name="open" /></ToolBtn>
          <ToolBtn><Ico name="group" /></ToolBtn>
          <ToolBtn><Ico name="save" /></ToolBtn>
          <Sep $w={7} />
          <ToolBtn><Ico name="hand" /></ToolBtn>
          <ToolBtn $pressed><Ico name="pointer" /></ToolBtn>
          <ToolBtn><Ico name="nodeTool" /></ToolBtn>
          <ToolBtn><Ico name="linkTool" /></ToolBtn>
        </EditorTools>
        <EditorBody>
          <Node $x={35} $y={9}>
            <NodeCaption $gap={6}>Заказ</NodeCaption>
            <OrderIcon />
          </Node>
          <Node $x={211} $y={9}>
            <NodeCaption $gap={6}>Накладная</NodeCaption>
            <InvoiceIcon />
          </Node>
          <Wire $x={111} $y={50} width="84" height="12" viewBox="0 0 84 12">
            <path d="M0 6h72" stroke="#bbb" strokeWidth="3" />
            <path d="M72 1l11 5-11 5z" fill="#bbb" />
          </Wire>
          <Wire $x={280} $y={46} width="204" height="20" viewBox="0 0 204 20">
            <path d="M16 10h176" stroke="#bbb" strokeWidth="3" strokeDasharray="7 4" />
            <path d="M188 5l10 5-10 5z" fill="#bbb" />
            <circle cx="8" cy="10" r="7.5" fill="#bbb" />
            <circle cx="8" cy="10" r="4.5" fill="#ff0" />
            <rect x="5.5" y="7.5" width="5" height="5" fill="#ff0" stroke="#000" />
            <rect x="197.5" y="7.5" width="5" height="5" fill="#fff" stroke="#000" />
          </Wire>
          <WireLabel>Накладная-Ордер</WireLabel>
        </EditorBody>
        <EditorStrip />
        <EditorFoot>
          <Btn>ОК</Btn>
          <Btn>Отмена</Btn>
        </EditorFoot>
      </Win>

      {/* редактор связей */}
      <Win $x={758} $y={235} $w={372} $h={402}>
        <WindowTitle strong text="Редактор связей" height={27} under={2} pad={6} right={5} />
        <DialogStrip>
          <SerifA>A</SerifA>
          <Sep $w={12} />
          <Ico name="elbow" />
        </DialogStrip>
        <DialogBody>
          <CaptionRow>
            <CaptionLabel>Подпись:</CaptionLabel>
            <CaptionInput>Накладная-Ордер</CaptionInput>
          </CaptionRow>
          <GroupGrid>
            <Group>
              <Legend>ID связи</Legend>
              <FieldLine $top={5}>
                <FieldBox $w="139px" $outline $muted>6</FieldBox>
              </FieldLine>
            </Group>
            <Group>
              <Legend>Ширина линии</Legend>
              <FieldLine $top={5}>
                <FieldBox $w="139px">3<SpinGlyph /></FieldBox>
              </FieldLine>
            </Group>
            <Group>
              <Legend>Начало линии</Legend>
              <Choice value="Круг" />
              <Spin label="Размер:" value="10" />
            </Group>
            <Group>
              <Legend>Окончание линии</Legend>
              <Choice value="Стрела1" />
              <Spin label="Размер:" value="2" />
            </Group>
            <Group>
              <Legend>Стиль</Legend>
              <RadioRow $top={8}><Radio /><RadioLabel>Сплошная</RadioLabel><Sample $w={70} /></RadioRow>
              <RadioRow><Radio $on /><RadioLabel>Тире</RadioLabel><Sample $w={67} $dash={19} $space={5} /></RadioRow>
              <RadioRow><Radio /><RadioLabel>Точки</RadioLabel><Sample $w={69} $dash={4} $space={2} /></RadioRow>
            </Group>
            <Group>
              <Legend>Цвет</Legend>
              <SwatchRow $top={18}>Линия:<Swatch $color="#bebebe" /></SwatchRow>
              <SwatchRow $top={19}>Заливка:<Swatch $color="#ffff00" /></SwatchRow>
            </Group>
          </GroupGrid>
          <Rule />
          <DialogFoot>
            <Btn $default>Применить</Btn>
            <Grow />
            <Btn>ОК</Btn>
            <Btn>Отмена</Btn>
          </DialogFoot>
        </DialogBody>
      </Win>
    </Page>
  );
}
